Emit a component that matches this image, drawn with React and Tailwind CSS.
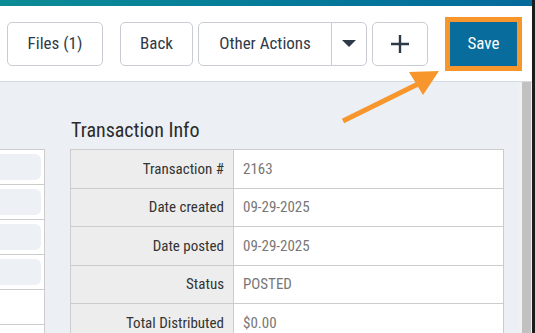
import React from 'react';

const rows = [
  { label: 'Transaction #', value: '2163' },
  { label: 'Date created', value: '09-29-2025' },
  { label: 'Date posted', value: '09-29-2025' },
  { label: 'Status', value: 'POSTED' },
  { label: 'Total Distributed', value: '$0.00' },
];

const font = { fontFamily: '"Roboto Condensed", Roboto, "Liberation Sans", sans-serif' };

const Btn = ({ children, className = '' }) => (
  <div className={`h-[44px] flex items-center justify-center rounded-[5px] border border-[#c9cdd3] bg-white text-[17px] text-[#2f3a48] ${className}`}>
    {children}
  </div>
);

const App = () => {
  return (
    <div className="relative w-[535px] h-[333px] overflow-hidden flex bg-[#1c1c1c]" style={font}>
      <div className="w-[532px] flex flex-col">
        <div className="h-[6px] shrink-0 bg-gradient-to-r from-[#0c8c95] to-[#066a9c]" />
        <div className="h-[76px] shrink-0 bg-white border-b border-[#d6dbe1] flex items-start pt-[16px]">
          <Btn className="ml-[7px] w-[96px]">Files (1)</Btn>
          <Btn className="ml-[17px] w-[73px]">Back</Btn>
          <div className="ml-[5px] w-[169px] h-[44px] flex rounded-[5px] border border-[#c9cdd3] text-[17px] text-[#2f3a48]">
            <div className="flex-1 flex items-center justify-center">Other Actions</div>
            <div className="w-[35px] border-l border-[#c9cdd3] flex items-center justify-center">
              <svg width="14" height="8" viewBox="0 0 14 8"><path d="M0 0h14L7 7z" fill="#2f3a48" /></svg>
            </div>
          </div>
          <Btn className="ml-[5px] w-[56px]">
            <svg width="18" height="18" viewBox="0 0 18 18"><path d="M9 0v18M0 9h18" stroke="#2f3a48" strokeWidth="2.4" /></svg>
          </Btn>
          <div className="ml-[17px] -mt-[5px] w-[77px] h-[54px] border-[5px] border-[#f7962c] bg-[#086d9c] flex items-center justify-center text-[17px] text-white">
            Save
          </div>
        </div>
        <div className="flex-1 min-h-0 overflow-hidden flex bg-[#eceff4]">
          <div className="flex-1 flex items-start pt-[67px]">
            <div className="w-[45px] shrink-0 bg-white border-r border-y border-[#cccccc] flex flex-col">
              {[true, true, true, true, false, false].map((box, i) => (
                <div key={i} className="h-[35px] shrink-0 border-b border-[#cccccc] last:border-b-0 pr-[3px] py-[4px]">
                  {box && <div className="h-full rounded-r-[6px] bg-[#edf0f4]" />}
                </div>
              ))}
            </div>
            <div className="ml-[25px] w-[434px] shrink-0 -mt-[37px]">
              <div className="h-[37px] text-[20px] text-[#2b2b2b] leading-[37px] pl-[1px]">Transaction Info</div>
              <div className="border border-[#cccccc] bg-white">
                {rows.map((r) => (
                  <div key={r.label} className="h-[38.5px] flex border-b border-[#cccccc] text-[15px]">
                    <div className="w-[163px] bg-[#ededed] border-r border-[#cccccc] flex items-center justify-end pr-[9px] text-[#333333]">
                      {r.label}
                    </div>
                    <div className="flex-1 flex items-center pl-[9px] text-[#777777]">{r.value}</div>
                  </div>
                ))}
              </div>
            </div>
          </div>
          <div className="w-[13px] shrink-0 bg-[#f1f1f1] pl-[3px] pr-[1px]">
            <div className="h-full bg-[#c1c1c1]" />
          </div>
        </div>
      </div>
      <svg className="absolute left-[335px] top-[60px] pointer-events-none" width="110" height="70" viewBox="335 60 110 70">
        <path d="M343 121L418 84" stroke="#f7962c" strokeWidth="5" />
        <path d="M439 71L409 72L423 95z" fill="#f7962c" />
      </svg>
    </div>
  );
};

export default App;
